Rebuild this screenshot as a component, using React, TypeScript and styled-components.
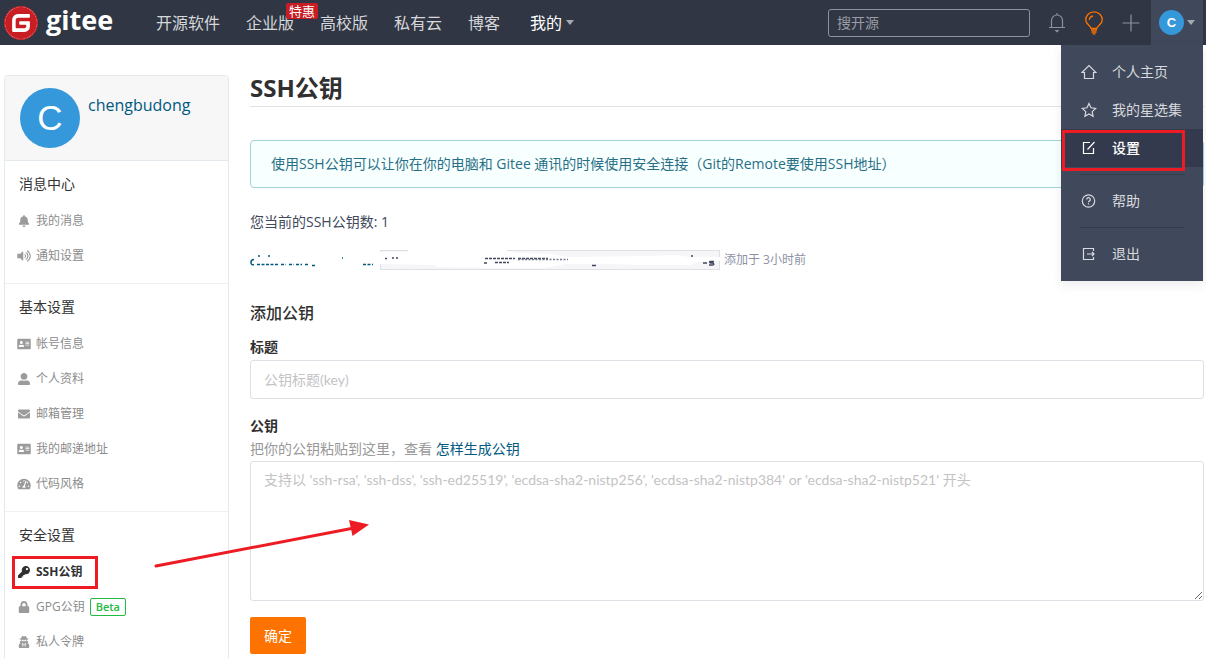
import React from "react";
import styled, { createGlobalStyle, css } from "styled-components";
import { SiGitee } from "react-icons/si";
import {
  FaBell,
  FaVolumeUp,
  FaAddressCard,
  FaUserAlt,
  FaEnvelope,
  FaTachometerAlt,
  FaKey,
  FaLock,
  FaUserSecret,
} from "react-icons/fa";

const GlobalStyle = createGlobalStyle`
  * { box-sizing: border-box; }
  html { scrollbar-width: none; }
  body {
    margin: 0;
    background: #fff;
    color: #40485b;
    font-family: "Open Sans", "Noto Sans CJK SC", sans-serif;
    font-size: 14px;
    line-height: 20px;
  }
  a { color: inherit; text-decoration: none; }
  h1, h2, h3, p { margin: 0; }
  button, input, textarea { font: inherit; }
`;

const Page = styled.div`
  position: relative;
  min-height: 100vh;
`;

/* ---------- header ---------- */

const Header = styled.header`
  display: flex;
  align-items: center;
  height: 45px;
  padding: 0 3px 0 4px;
  background: #303643;
`;

const Brand = styled.a`
  display: flex;
  align-items: center;
  gap: 8px;
  width: 152px;
  color: #fff;
  font-size: 27px;
  font-weight: 700;
  line-height: 34px;
`;

const BrandText = styled.span`
  padding-bottom: 6px;
`;

const BrandMark = styled.span`
  display: flex;
  border-radius: 50%;
  background: #fff;
  color: #c71d23;
  border: 1px solid #c71d23;
`;

const Nav = styled.nav`
  display: flex;
  gap: 26px;
  flex: 1;
  font-size: 16px;
  line-height: 24px;
  color: #d5d7da;
  white-space: nowrap;
`;

const NavLink = styled.a<{ $active?: boolean }>`
  position: relative;
  display: flex;
  align-items: center;
  gap: 4px;
  ${(p) => p.$active && css`color: #fff; padding-left: 4px;`}
`;

const PromoTag = styled.span`
  position: absolute;
  top: -8px;
  left: 40px;
  padding: 0 3px;
  border-radius: 2px;
  background: #c71d23;
  color: #fff;
  font-size: 13px;
  line-height: 16px;
`;

const Caret = styled.span`
  border: 4px solid transparent;
  border-top: 5px solid #a5a9b2;
  border-bottom: 0;
`;

const Search = styled.input`
  width: 202px;
  height: 28px;
  padding: 0 8px;
  border: 1px solid #8c92a4;
  border-radius: 3px;
  background: transparent;
  color: #fff;
  &::placeholder { color: #999da5; opacity: 1; }
`;

const Tools = styled.div`
  display: flex;
  align-items: center;
  gap: 13px;
  padding: 0 8px 0 15px;
`;

const IconButton = styled.button<{ $color: string }>`
  display: flex;
  align-items: center;
  justify-content: center;
  width: 24px;
  height: 28px;
  padding: 0;
  border: 0;
  background: none;
  color: ${(p) => p.$color};
`;

const Account = styled.div`
  position: relative;
  z-index: 2;
`;

const AccountButton = styled.button`
  display: flex;
  align-items: center;
  gap: 3px;
  width: 52px;
  height: 45px;
  padding: 0 8px;
  border: 0;
  background: #40485b;
`;

const Avatar = styled.span<{ $size: number; $font: number; $bold?: boolean }>`
  display: flex;
  flex: none;
  align-items: center;
  justify-content: center;
  width: ${(p) => p.$size}px;
  height: ${(p) => p.$size}px;
  border-radius: 50%;
  background: #3498db;
  color: #fff;
  font-family: "Liberation Sans", Arial, sans-serif;
  font-size: ${(p) => p.$font}px;
  font-weight: ${(p) => (p.$bold ? 700 : 400)};
`;

const Menu = styled.div`
  position: absolute;
  top: 45px;
  right: 0;
  width: 142px;
  padding: 8px 0;
  background: #40485b;
  box-shadow: 0 4px 10px rgba(64, 72, 91, 0.1);
`;

const MenuItem = styled.a<{ $active?: boolean }>`
  position: relative;
  display: flex;
  align-items: center;
  gap: 15px;
  height: 38px;
  padding-left: 20px;
  color: #d9dade;
  white-space: nowrap;
  ${(p) => p.$active && css`background: #343a4d; color: #fff; font-weight: 500;`}
`;

const MenuRule = styled.hr`
  height: 1px;
  margin: 7px 18px;
  border: 0;
  background: #353c4b;
`;

const Highlight = styled.span<{ $menu?: boolean }>`
  position: absolute;
  border: 3px solid #ed1c24;
  pointer-events: none;
  ${(p) => (p.$menu ? css`inset: 1px 18px -4px 1px;` : css`inset: 2px auto 0 7px; width: 86px;`)}
`;

/* ---------- body ---------- */

const Body = styled.div`
  display: flex;
  align-items: flex-start;
  gap: 21px;
  padding: 30px 2px 0 4px;
`;

const Sidebar = styled.aside`
  flex: none;
  width: 225px;
  border: 1px solid #e3e9ed;
  border-radius: 4px;
`;

const Profile = styled.div`
  display: flex;
  gap: 8px;
  height: 85px;
  padding: 12px 15px;
  border-bottom: 1px solid #e3e9ed;
  border-radius: 4px 4px 0 0;
  background: #f7f7f8;
  color: #005980;
  font-size: 16px;
  line-height: 34px;
`;

const Group = styled.section`
  padding: 12px 0 10px;
  border-bottom: 1px solid #f0f0f1;
`;

const GroupTitle = styled.h2`
  height: 22px;
  margin: 0 14px 8px;
  color: #333;
  font-size: 14px;
  font-weight: 400;
  line-height: 22px;
`;

const SideLink = styled.a<{ $active?: boolean }>`
  position: relative;
  display: flex;
  align-items: center;
  gap: 5px;
  height: 35px;
  padding-left: 12px;
  color: #8c8c8c;
  font-size: 12px;
  svg { width: 14px; color: #9b9b9b; }
  ${(p) => p.$active && css`
    color: #303030;
    font-weight: 700;
    svg { color: #303030; }
  `}
`;

const Beta = styled.span`
  padding: 0 5px;
  border: 1px solid #21ba45;
  border-radius: 2px;
  color: #21ba45;
  font-size: 11px;
  font-weight: 600;
  line-height: 16px;
`;

const Main = styled.main`
  flex: 1;
  min-width: 0;
`;

const Title = styled.h1`
  padding-bottom: 5px;
  border-bottom: 1px solid #e1e3e6;
  color: #303030;
  font-size: 24px;
  line-height: 26px;
`;

const Notice = styled.p`
  margin-top: 33px;
  padding: 13px 20px;
  border: 1px solid #a3d3d9;
  border-radius: 4px;
  background: #f8ffff;
  color: #276f86;
`;

const Count = styled.p`
  margin-top: 24px;
`;

const KeyRow = styled.div`
  display: flex;
  align-items: center;
  gap: 4px;
  height: 20px;
  margin-top: 18px;
  color: #8c92a4;
  font-size: 12px;
`;

const KeyArt = styled.svg`
  flex: none;
`;

const Form = styled.form`
  display: flex;
  flex-direction: column;
  align-items: flex-start;
  padding-top: 31px;
`;

const FormTitle = styled.h3`
  color: #303030;
  font-size: 16px;
  font-weight: 500;
  line-height: 24px;
`;

const Label = styled.label<{ $gap: number }>`
  margin-top: ${(p) => p.$gap}px;
  color: #303030;
  font-weight: 700;
`;

const field = css`
  width: 100%;
  border: 1px solid #dfe0e6;
  border-radius: 3px;
  background: #fff;
  color: #40485b;
  font-family: Lato, "Noto Sans CJK SC", sans-serif;
  &::placeholder { color: #c3c3c5; opacity: 1; }
`;

const TextInput = styled.input`
  ${field}
  height: 39px;
  margin-top: 3px;
  padding: 0 13px;
`;

const TextArea = styled.textarea`
  ${field}
  height: 140px;
  margin-top: 2px;
  padding: 8px 13px;
  resize: vertical;
`;

const Hint = styled.p`
  margin-top: 3px;
  color: #999;
  a { color: #005980; }
`;

const Submit = styled.button`
  height: 37px;
  margin-top: 16px;
  padding: 0 14px;
  border: 0;
  border-radius: 2px;
  background: #fe7300;
  color: #fff;
`;

const Arrow = styled.svg`
  position: absolute;
  top: 515px;
  left: 150px;
  pointer-events: none;
`;

/* ---------- icons ---------- */

const line = { fill: "none", stroke: "currentColor" } as const;

const BellIcon = () => (
  <svg width="18" height="22" viewBox="0 0 18 22" {...line}>
    <path d="M1 15.5h16M3.5 15.5V8.5a5.5 5.5 0 0 1 11 0v7M9 1v2" strokeWidth="1.2" />
    <path d="M6.5 18h5L9 20.5z" fill="currentColor" stroke="none" />
  </svg>
);

const BulbIcon = () => (
  <svg width="20" height="24" viewBox="0 0 20 24" {...line} strokeWidth="1.3">
    <path d="M7 17.3C7 15 1.700 13.500 1.700 9a8.300 8.200 0 0 1 16.600 0c0 4.500-5.300 6-5.300 8.300z" />
    <path d="M5.300 9A4.500 4.500 0 0 1 9 5M7 19h6M7.500 21h5M8.500 22.800h3" />
  </svg>
);

const PlusIcon = () => (
  <svg width="18" height="18" viewBox="0 0 18 18" {...line}>
    <path d="M9 0.500v17M0.500 9h17" strokeWidth="1.2" />
  </svg>
);

const HomeIcon = () => (
  <svg width="16" height="16" viewBox="0 0 16 16" {...line} strokeWidth="1.2">
    <path d="M1 8.500L8 1.500l7 7H12.500V14.500h-9V8.500z" />
  </svg>
);

const StarIcon = () => (
  <svg width="16" height="16" viewBox="0 0 16 16" {...line} strokeWidth="1.2">
    <path d="M8 1.500l2 4.300 4.700.6-3.500 3.200.9 4.700L8 12l-4.100 2.300.9-4.700L1.300 6.400 6 5.800z" />
  </svg>
);

const EditIcon = () => (
  <svg width="16" height="16" viewBox="0 0 16 16" {...line} strokeWidth="1.200">
    <path d="M9 2.500H2.500v11h10V8M6.500 9.500L13.500 2" />
  </svg>
);

const HelpIcon = () => (
  <svg width="16" height="16" viewBox="0 0 16 16" {...line} strokeWidth="1.200">
    <circle cx="7.500" cy="8" r="6.200" />
    <path d="M5.700 6.500a1.800 1.800 0 1 1 2.600 1.600c-.6.300-.8.600-.8 1.200M7.500 10.300v1.200" />
  </svg>
);

const ExitIcon = () => (
  <svg width="16" height="16" viewBox="0 0 16 16" {...line} strokeWidth="1.200">
    <path d="M12.500 5V2.500h-10v11h10V11M6 8h7M11 6l2 2-2 2" />
  </svg>
);

const groups = [
  {
    title: "消息中心",
    items: [
      { label: "我的消息", icon: FaBell },
      { label: "通知设置", icon: FaVolumeUp },
    ],
  },
  {
    title: "基本设置",
    items: [
      { label: "帐号信息", icon: FaAddressCard },
      { label: "个人资料", icon: FaUserAlt },
      { label: "邮箱管理", icon: FaEnvelope },
      { label: "我的邮递地址", icon: FaAddressCard },
      { label: "代码风格", icon: FaTachometerAlt },
    ],
  },
  {
    title: "安全设置",
    items: [
      { label: "SSH公钥", icon: FaKey, active: true },
      { label: "GPG公钥", icon: FaLock, beta: true },
      { label: "私人令牌", icon: FaUserSecret },
    ],
  },
] as {
  title: string;
  items: { label: string; icon: React.ComponentType<{ size?: number }>; active?: boolean; beta?: boolean }[];
}[];

/* The saved key, with its name and fingerprint brushed over. */
const MaskedKey = () => (
  <KeyArt width="470" height="20" viewBox="0 0 470 20" aria-hidden="true">
    <rect x="130.500" y="0.500" width="339" height="19" fill="#f6f6f9" stroke="#dfe0e6" />
    <path
      fill="#fff"
      d="M129 2L158 2V0H257V1L270 3L300 4L318 7L400 6L425 5L440 7L470 7V11L448 12L440 15L390 15L360 14L315 14L295 18L250 18L186 17L185 15L129 14z"
    />
    <g fill="none" stroke="#005980" strokeWidth="1.500">
      <path d="M4 9.500q-3 0-3 3t3 2M8 6h2M18 6h2" />
      <path d="M7 14.500h22M31 14.500h5M39 14.500h5M46 14.500h6M55 14.500h4" strokeDasharray="3 1.500" />
      <path d="M62 15.500h3M92 8h1M113 14.500h10" strokeDasharray="3 1.500" />
    </g>
    <g fill="none" stroke="#40485b" strokeWidth="1.500">
      <path d="M135 8.500h4M142 8h6" strokeDasharray="2 2" />
      <path d="M235 8.500h30M234 13h3M245 12.500h14M268 8.500h30" strokeDasharray="3 1" />
      <path d="M268 9.500h50" strokeDasharray="2 1.500" stroke="#73798a" />
      <path d="M342 15.500h4M441 6h2M453 13h4M464 11.500h-4q-1 1.500 1 1.500h2q2 2-1 2h-3" />
    </g>
  </KeyArt>
);

export default function App() {
  return (
    <Page>
      <GlobalStyle />
      <Header>
        <Brand href="#">
          <BrandMark>
            <SiGitee size={32} />
          </BrandMark>
          <BrandText>gitee</BrandText>
        </Brand>
        <Nav>
          <NavLink href="#">开源软件</NavLink>
          <NavLink href="#">
            企业版<PromoTag>特惠</PromoTag>
          </NavLink>
          <NavLink href="#">高校版</NavLink>
          <NavLink href="#">私有云</NavLink>
          <NavLink href="#">博客</NavLink>
          <NavLink href="#" $active>
            我的
            <Caret />
          </NavLink>
        </Nav>
        <Search type="search" placeholder="搜开源" aria-label="搜开源" />
        <Tools>
          <IconButton type="button" aria-label="通知" $color="#8c92a4">
            <BellIcon />
          </IconButton>
          <IconButton type="button" aria-label="提示" $color="#fe7300">
            <BulbIcon />
          </IconButton>
          <IconButton type="button" aria-label="新建" $color="#8c92a4">
            <PlusIcon />
          </IconButton>
        </Tools>
        <Account>
          <AccountButton type="button" aria-label="帐号">
            <Avatar $size={25} $font={13} $bold>C</Avatar>
            <Caret />
          </AccountButton>
          <Menu>
            <MenuItem href="#"><HomeIcon />个人主页</MenuItem>
            <MenuItem href="#"><StarIcon />我的星选集</MenuItem>
            <MenuItem href="#" $active><EditIcon />设置<Highlight $menu /></MenuItem>
            <MenuRule />
            <MenuItem href="#"><HelpIcon />帮助</MenuItem>
            <MenuRule />
            <MenuItem href="#"><ExitIcon />退出</MenuItem>
          </Menu>
        </Account>
      </Header>
      <Body>
        <Sidebar>
          <Profile>
            <Avatar $size={60} $font={35}>C</Avatar>
            <a href="#">chengbudong</a>
          </Profile>
          {groups.map((group) => (
            <Group key={group.title}>
              <GroupTitle>{group.title}</GroupTitle>
              {group.items.map(({ label, icon: Icon, active, beta }) => (
                <SideLink key={label} href="#" $active={active}>
                  <Icon size={12} />
                  {label}
                  {beta && <Beta>Beta</Beta>}
                  {active && <Highlight />}
                </SideLink>
              ))}
            </Group>
          ))}
        </Sidebar>
        <Main>
          <Title>SSH公钥</Title>
          <Notice>使用SSH公钥可以让你在你的电脑和 Gitee 通讯的时候使用安全连接（Git的Remote要使用SSH地址）</Notice>
          <Count>您当前的SSH公钥数: 1</Count>
          <KeyRow>
            <MaskedKey />
            添加于 3小时前
          </KeyRow>
          <Form>
            <FormTitle>添加公钥</FormTitle>
            <Label htmlFor="key-title" $gap={12}>标题</Label>
            <TextInput id="key-title" placeholder="公钥标题(key)" />
            <Label htmlFor="key-body" $gap={17}>公钥</Label>
            <Hint>
              把你的公钥粘贴到这里，查看 <a href="#">怎样生成公钥</a>
            </Hint>
            <TextArea
              id="key-body"
              placeholder="支持以 'ssh-rsa', 'ssh-dss', 'ssh-ed25519', 'ecdsa-sha2-nistp256', 'ecdsa-sha2-nistp384' or 'ecdsa-sha2-nistp521' 开头"
            />
            <Submit type="button">确定</Submit>
          </Form>
        </Main>
      </Body>
      <Arrow width="224" height="60" viewBox="0 0 224 60" aria-hidden="true">
        <path d="M6 51L204 13" stroke="#ed1c24" strokeWidth="3" strokeLinecap="round" />
        <path d="M199 5L219 9.500L202.500 21z" fill="#ed1c24" />
      </Arrow>
    </Page>
  );
}
